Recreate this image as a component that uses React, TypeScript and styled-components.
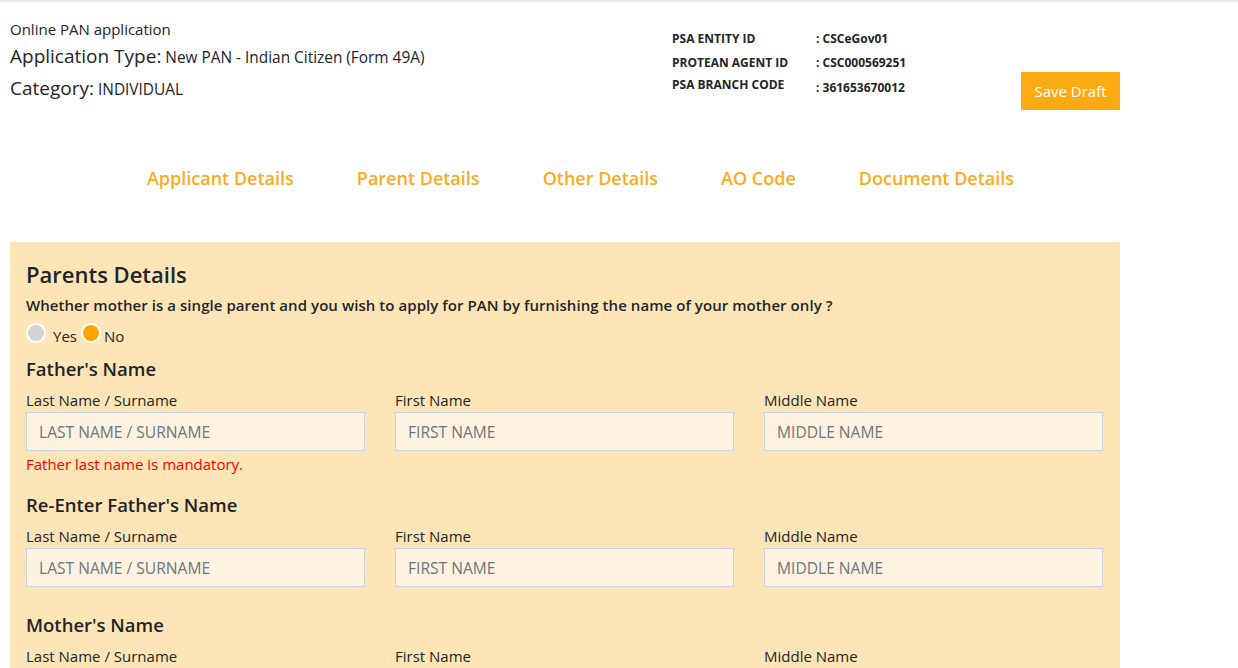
import React from "react";
import styled, { createGlobalStyle } from "styled-components";

const Global = createGlobalStyle`
  html, body { margin: 0; padding: 0; background: #fff; }
  body { font-family: "Open Sans", "Noto Sans", sans-serif; color: #212529; }
  * { box-sizing: border-box; }
`;

const TopLine = styled.div`
  height: 2px;
  background: #ececec;
`;

const Page = styled.div`
  width: 1110px;
  margin-left: 10px;
`;

const Header = styled.div`
  display: grid;
  grid-template-columns: 662px 1fr auto;
  padding-top: 15px;
`;

const TitleCol = styled.div`
  display: flex;
  flex-direction: column;
`;

const SmallTitle = styled.div`
  font-size: 15px;
  line-height: 24px;
`;

const Line = styled.div`
  font-size: 15.4px;
  line-height: 31px;
`;

const Big = styled.span`
  font-size: 19px;
`;

const InfoGrid = styled.div`
  display: grid;
  grid-template-columns: 144px auto;
  row-gap: 8px;
  padding-top: 14px;
  font-size: 12px;
  line-height: 16px;
  font-weight: 700;
  align-self: start;
`;

const InfoCell = styled.div<{ $shift?: number }>`
  margin-top: ${(p) => p.$shift ?? 0}px;
`;

const SaveBtn = styled.button`
  margin-top: 55px;
  align-self: start;
  width: 99px;
  height: 38px;
  border: none;
  background: #fcab14;
  color: #fff;
  font-family: inherit;
  font-size: 15px;
  padding: 0;
`;

const Nav = styled.nav`
  display: flex;
  justify-content: center;
  gap: 63px;
  margin-top: 54px;
  height: 78px;
  padding-left: 31px;
`;

const NavLink = styled.a`
  color: #fcab1c;
  font-size: 18px;
  font-weight: 600;
  line-height: 28px;
`;

const Panel = styled.section`
  background: #fee5b7;
  padding: 17px 17px 0 16px;
`;

const PanelTitle = styled.h2`
  margin: 0;
  font-size: 22px;
  font-weight: 600;
  line-height: 30px;
`;

const Question = styled.p`
  margin: 5px 0 0;
  font-size: 15px;
  font-weight: 600;
  line-height: 22px;
  letter-spacing: 0.06px;
`;

const RadioRow = styled.div`
  display: flex;
  align-items: flex-start;
  height: 39px;
  font-size: 15px;
`;

const Radio = styled.span<{ $on?: boolean }>`
  width: 20px;
  height: 20px;
  border-radius: 50%;
  border: 2px solid #fff;
  background: ${(p) => (p.$on ? "#ffa500" : "#d3d3d3")};
  margin-top: 7px;
`;

const RadioLabel = styled.span<{ $gap: number; $after: number }>`
  margin-left: ${(p) => p.$gap}px;
  margin-right: ${(p) => p.$after}px;
  padding-top: 9px;
  line-height: 22px;
`;

const GroupTitle = styled.h3<{ $top: number }>`
  margin: ${(p) => p.$top}px 0 0;
  font-size: 18.5px;
  font-weight: 600;
  line-height: 28px;
`;

const FieldGrid = styled.div`
  display: grid;
  grid-template-columns: repeat(3, 1fr);
  column-gap: 30px;
  margin-top: 5px;
`;

const Field = styled.div`
  display: flex;
  flex-direction: column;
`;

const Label = styled.label`
  font-size: 15px;
  line-height: 24px;
`;

const Input = styled.input`
  height: 39px;
  width: 100%;
  background: #fef2e1;
  border: 1px solid #c9d2dc;
  padding: 0 12px;
  font-family: inherit;
  font-size: 15.6px;
  color: #495057;
  outline: none;
  &::placeholder { color: #6c757d; }
`;

const ErrorText = styled.div`
  color: #ff0000;
  font-size: 15px;
  line-height: 24px;
  margin-top: 1px;
`;

type Cols = { err?: string };

const NameFields: React.FC<Cols> = ({ err }) => (
  <FieldGrid>
    <Field>
      <Label>Last Name / Surname</Label>
      <Input placeholder="LAST NAME / SURNAME" />
      {err && <ErrorText>{err}</ErrorText>}
    </Field>
    <Field>
      <Label>First Name</Label>
      <Input placeholder="FIRST NAME" />
    </Field>
    <Field>
      <Label>Middle Name</Label>
      <Input placeholder="MIDDLE NAME" />
    </Field>
  </FieldGrid>
);

export default function App() {
  return (
    <>
      <Global />
      <TopLine />
      <Page>
        <Header>
          <TitleCol>
            <SmallTitle>Online PAN application</SmallTitle>
            <Line>
              <Big>Application Type:</Big> New PAN - Indian Citizen (Form 49A)
            </Line>
            <Line>
              <Big>Category:</Big> INDIVIDUAL
            </Line>
          </TitleCol>
          <InfoGrid>
            <InfoCell>PSA ENTITY ID</InfoCell>
            <InfoCell>: CSCeGov01</InfoCell>
            <InfoCell>PROTEAN AGENT ID</InfoCell>
            <InfoCell>: CSC000569251</InfoCell>
            <InfoCell $shift={-2}>PSA BRANCH CODE</InfoCell>
            <InfoCell $shift={1}>: 361653670012</InfoCell>
          </InfoGrid>
          <SaveBtn>Save Draft</SaveBtn>
        </Header>
        <Nav>
          <NavLink>Applicant Details</NavLink>
          <NavLink>Parent Details</NavLink>
          <NavLink>Other Details</NavLink>
          <NavLink>AO Code</NavLink>
          <NavLink>Document Details</NavLink>
        </Nav>
        <Panel>
          <PanelTitle>Parents Details</PanelTitle>
          <Question>
            Whether mother is a single parent and you wish to apply for PAN by furnishing the name of your mother only ?
          </Question>
          <RadioRow>
            <Radio />
            <RadioLabel $gap={7} $after={4}>Yes</RadioLabel>
            <Radio $on />
            <RadioLabel $gap={3} $after={0}>No</RadioLabel>
          </RadioRow>
          <GroupTitle $top={0}>Father's Name</GroupTitle>
          <NameFields err="Father last name is mandatory." />
          <GroupTitle $top={15}>Re-Enter Father's Name</GroupTitle>
          <NameFields />
          <GroupTitle $top={24}>Mother's Name</GroupTitle>
          <NameFields />
        </Panel>
      </Page>
    </>
  );
}
